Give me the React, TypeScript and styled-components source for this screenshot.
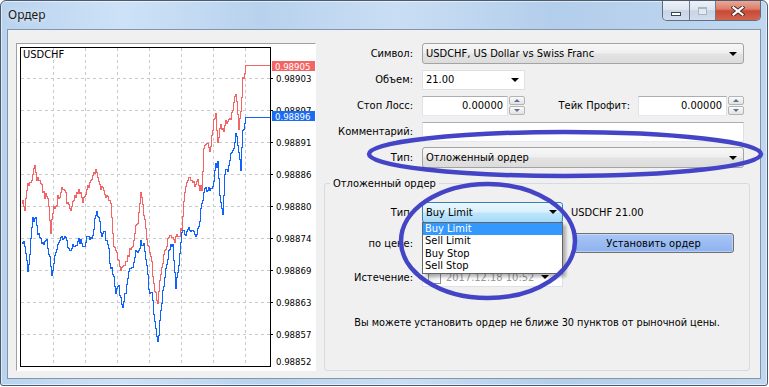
import React from 'react';
import styled, { createGlobalStyle } from 'styled-components';

const UI_FONT = `"DejaVu Sans Condensed", "DejaVu Sans", "Liberation Sans", sans-serif`;

const GlobalStyle = createGlobalStyle`
  html, body { margin: 0; padding: 0; background: #ffffff; }
  * { box-sizing: border-box; }
`;

const Stage = styled.div`
  position: relative;
  width: 769px;
  height: 387px;
  overflow: hidden;
`;

const Window = styled.div`
  width: 768px;
  height: 386px;
  display: flex;
  flex-direction: column;
  border: 1px solid #4b5a6e;
  border-radius: 6px 6px 3px 3px;
  background: linear-gradient(90deg, #b9d3ee 0%, #cde2f7 16%, #b8d2ed 34%, #c9def4 52%, #b3ceeb 72%, #c0d7ef 100%);
  box-shadow: inset 0 0 0 1px rgba(255, 255, 255, 0.55);
  font-family: ${UI_FONT};
  font-size: 11px;
  color: #000;
`;

const TitleBar = styled.div`
  height: 28px;
  display: flex;
  align-items: flex-start;
  padding: 0 6px 0 7px;
`;

const Title = styled.div`
  flex: 1;
  margin-top: 6px;
  font-family: "Noto Sans", "Liberation Sans", sans-serif;
  font-size: 12px;
  line-height: 16px;
  color: #1b1b1b;
  text-shadow: 0 0 6px rgba(255, 255, 255, 0.9);
`;

const CaptionGroup = styled.div`
  display: flex;
  height: 20px;
  border: 1px solid #5d6d82;
  border-top: none;
  border-radius: 0 0 5px 5px;
  overflow: hidden;
`;

const CaptionButton = styled.div<{ $kind: 'min' | 'max' | 'close' }>`
  width: ${p => (p.$kind === 'close' ? 45 : 26)}px;
  display: flex;
  align-items: center;
  justify-content: center;
  border-left: ${p => (p.$kind === 'min' ? 'none' : '1px solid #6b7a8e')};
  background: ${p =>
    p.$kind === 'close'
      ? 'linear-gradient(#eaa898 0%, #dc7f6c 42%, #c84a35 52%, #d2644f 100%)'
      : 'linear-gradient(#eef2f7 0%, #dde5ef 45%, #c8d4e3 52%, #d3dded 100%)'};
`;

const MinGlyph = styled.span`
  width: 10px;
  height: 4px;
  margin-top: 6px;
  background: #fff;
  border: 1px solid #3a475a;
`;

const MaxGlyph = styled.span`
  width: 9px;
  height: 8px;
  border: 1px solid #a9b6c6;
  border-top-width: 2px;
  background: #e3e9f1;
`;

const Client = styled.div`
  flex: 1;
  margin: 0 6px 6px 6px;
  border: 1px solid #8395ab;
  background: #f0f0f0;
  display: flex;
  padding: 13px 10px 6px 8px;
`;

const ChartPanel = styled.div`
  width: 300px;
  height: 328px;
  flex-shrink: 0;
  background: #fff;
  border: 1px solid;
  border-color: #a0a0a0 #ffffff #ffffff #a0a0a0;
  overflow: hidden;
  svg {
    display: block;
  }
`;

const RightPane = styled.div`
  flex: 1;
  margin-left: 8px;
  display: flex;
  flex-direction: column;
`;

const Row = styled.div<{ $mt?: number; $h?: number }>`
  display: flex;
  align-items: center;
  height: ${p => p.$h ?? 21}px;
  margin-top: ${p => p.$mt ?? 0}px;
  padding-right: 6px;
`;

const Label = styled.label<{ $w?: number }>`
  width: ${p => p.$w ?? 89}px;
  flex-shrink: 0;
  margin-right: 9px;
  text-align: right;
  white-space: nowrap;
`;

const InlineLabel = styled.span`
  flex: 1;
  text-align: right;
  margin-right: 8px;
  white-space: nowrap;
`;

const ComboBox = styled.div<{ $w?: number; $hot?: boolean; $editable?: boolean }>`
  position: relative;
  width: ${p => (p.$w ? `${p.$w}px` : 'auto')};
  flex: ${p => (p.$w ? '0 0 auto' : '1')};
  height: ${p => (p.$editable ? 20 : 21)}px;
  display: flex;
  align-items: center;
  padding: 0 5px 0 3px;
  border: 1px solid ${p => (p.$hot ? '#3c7fb1' : p.$editable ? '#dde1e7' : '#a3a3a3')};
  border-radius: ${p => (p.$editable ? 0 : 3)}px;
  background: ${p =>
    p.$hot
      ? 'linear-gradient(#eaf6fd 0%, #d9f0fc 48%, #bee6fd 52%, #a7d9f5 100%)'
      : p.$editable
      ? '#ffffff'
      : 'linear-gradient(#f7f7f7 0%, #efefef 48%, #e3e3e3 52%, #dcdcdc 100%)'};
  white-space: nowrap;
`;

const Arrow = styled.span<{ $mr?: number }>`
  width: 0;
  height: 0;
  margin-left: auto;
  margin-right: ${p => p.$mr ?? 1}px;
  border-left: 4px solid transparent;
  border-right: 4px solid transparent;
  border-top: 4px solid #000;
`;

const EditBox = styled.div<{ $align?: 'left' | 'right' }>`
  flex: 1;
  height: 20px;
  display: flex;
  align-items: center;
  justify-content: ${p => (p.$align === 'right' ? 'flex-end' : 'flex-start')};
  padding: 0 4px;
  background: #fff;
  border: 1px solid;
  border-color: #abadb3 #dbdfe6 #e3e9ef #e2e3ea;
`;

const SpinEdit = styled.div<{ $w: number }>`
  width: ${p => p.$w}px;
  flex-shrink: 0;
  display: flex;
  align-items: center;
  gap: 1px;
`;

const Spin = styled.div`
  width: 16px;
  height: 19px;
  display: flex;
  flex-direction: column;
  gap: 1px;
`;

const SpinHalf = styled.div<{ $down?: boolean }>`
  flex: 1;
  display: flex;
  align-items: center;
  justify-content: center;
  border: 1px solid #b4b4b4;
  border-radius: 2px;
  background: linear-gradient(#fbfbfb, #e2e2e2);
  &::after {
    content: '';
    border-left: 3px solid transparent;
    border-right: 3px solid transparent;
    ${p => (p.$down ? 'border-top: 3px solid #5a7196;' : 'border-bottom: 3px solid #5a7196;')}
  }
`;

const GroupBox = styled.fieldset`
  flex: 1;
  min-width: 0;
  margin: 9px 0 1px 0;
  padding: 0;
  border: 1px solid #d5dbe1;
  border-radius: 3px;
  display: flex;
  flex-direction: column;
`;

const GroupTitle = styled.legend`
  margin-left: 5px;
  padding: 0 3px;
  line-height: 13px;
  font-size: 11px;
`;

const Note = styled.span`
  margin-left: 8px;
  white-space: nowrap;
`;

const ActionButton = styled.button`
  width: 161px;
  height: 20px;
  margin-left: 10px;
  padding: 0;
  font-family: ${UI_FONT};
  font-size: 11px;
  color: #000;
  border: 1px solid #707070;
  border-radius: 3px;
  background: linear-gradient(#a9c6f5 0%, #9bbcf2 50%, #8fb2ee 100%);
  box-shadow: inset 0 0 0 1px rgba(255, 255, 255, 0.35);
`;

const DropList = styled.ul`
  position: absolute;
  top: 100%;
  left: -1px;
  right: -1px;
  margin: 0;
  padding: 0;
  list-style: none;
  background: #fff;
  border: 1px solid #646464;
  box-shadow: 3px 3px 3px rgba(0, 0, 0, 0.28);
  z-index: 2;
`;

const DropItem = styled.li<{ $active?: boolean }>`
  height: 12.5px;
  line-height: 12.5px;
  padding-left: 2px;
  background: ${p => (p.$active ? '#3399ff' : 'transparent')};
  color: ${p => (p.$active ? '#fff' : '#000')};
`;

const CheckBox = styled.span`
  width: 13px;
  height: 13px;
  margin: 0 5px 0 2px;
  border: 1px solid #8f8f8f;
  background: linear-gradient(135deg, #dfe3e8, #ffffff);
`;

const DateText = styled.span`
  color: #9a9a9a;
`;

const Message = styled.div`
  margin-top: 29px;
  text-align: center;
  white-space: nowrap;
  font-size: 10.8px;
`;

const Overlay = styled.svg`
  position: absolute;
  left: 0;
  top: 0;
  pointer-events: none;
  z-index: 5;
`;

// chart geometry: svg sits at page (17,44)
const OX = 17;
const OY = 44;

const redKeys = [
  [21, 203], [24, 205], [27, 190], [30, 178], [34, 168], [37, 178], [40, 188], [44, 195], [47, 192],
  [50, 232], [52, 210], [55, 200], [59, 192], [63, 188], [66, 200], [70, 208], [74, 196], [78, 194],
  [82, 198], [86, 192], [90, 185], [93, 176], [96, 172], [99, 186], [103, 190], [107, 192], [110, 205],
  [113, 245], [116, 255], [119, 268], [122, 272], [125, 262], [128, 256], [131, 245], [134, 232],
  [137, 218], [140, 196], [143, 215], [146, 238], [149, 250], [152, 275], [155, 292], [157, 302],
  [160, 272], [163, 252], [166, 240], [169, 232], [172, 236], [175, 238], [178, 240], [181, 228],
  [183, 200], [186, 186], [190, 181], [194, 184], [198, 183], [201, 188], [203, 145], [206, 142],
  [209, 150], [212, 128], [215, 110], [217, 140], [220, 125], [223, 128], [226, 120], [229, 116],
  [232, 110], [235, 94], [238, 126], [240, 112], [242, 80], [245, 65],
];

const blueKeys = [
  [21, 242], [24, 244], [27, 275], [29, 250], [32, 220], [35, 222], [38, 236], [42, 240], [46, 244],
  [49, 258], [51, 275], [54, 258], [57, 248], [60, 238], [64, 240], [68, 250], [72, 248], [76, 240],
  [80, 242], [84, 244], [88, 234], [92, 232], [95, 210], [97, 215], [100, 230], [104, 234], [107, 246],
  [110, 270], [113, 276], [115, 290], [118, 284], [122, 310], [125, 292], [128, 276], [132, 270],
  [135, 256], [138, 246], [140, 238], [143, 246], [146, 262], [148, 286], [152, 300], [155, 330],
  [157, 346], [159, 322], [161, 298], [165, 272], [168, 252], [172, 244], [175, 286], [178, 264],
  [181, 234], [185, 230], [190, 226], [195, 232], [198, 228], [200, 212], [203, 196], [206, 190],
  [210, 190], [212, 186], [214, 170], [217, 162], [219, 198], [222, 213], [224, 176], [228, 164],
  [232, 146], [235, 133], [238, 150], [240, 167], [242, 130], [245, 117],
];

const buildPath = (keys: number[][], seed: number, amp: number) => {
  let s = seed;
  const rand = () => {
    s = (s * 16807) % 2147483647;
    return s / 2147483647;
  };
  let n = 0;
  let seg = 0;
  const lastX = keys[keys.length - 1][0];
  let d = `M${keys[0][0] - OX + 0.5} ${keys[0][1] - OY + 0.5}`;
  for (let x = keys[0][0] + 1; x <= lastX; x++) {
    while (seg < keys.length - 2 && keys[seg + 1][0] < x) seg++;
    const [x0, y0] = keys[seg];
    const [x1, y1] = keys[seg + 1];
    const base = y0 + ((y1 - y0) * (x - x0)) / (x1 - x0);
    n = n * 0.5 + (rand() - 0.5) * amp;
    const y = x === lastX ? y1 : Math.round(base + n);
    d += `H${x - OX + 0.5}V${y - OY + 0.5}`;
  }
  d += `H${270 - OX}`;
  return d;
};

const gridY = [78, 110, 142, 174, 206, 238, 270, 302, 334];
const gridX = [53, 85, 117, 149, 181, 213, 245];
const axisLabels = ['0.98903', '0.98897', '0.98891', '0.98886', '0.98880', '0.98874', '0.98869', '0.98863', '0.98857'];

const Chart = () => {
  const red = buildPath(redKeys, 12345, 9);
  const blue = buildPath(blueKeys, 67891, 9);
  return (
    <svg width="298" height="326" viewBox="0 0 298 326" shapeRendering="crispEdges">
      {gridY.map(y => (
        <line key={`h${y}`} x1={4} x2={253} y1={y - OY + 0.5} y2={y - OY + 0.5} stroke="#c8c8c8" strokeDasharray="3 3" />
      ))}
      {gridX.map(x => (
        <line key={`v${x}`} x1={x - OX + 0.5} x2={x - OX + 0.5} y1={4} y2={322} stroke="#c8c8c8" strokeDasharray="3 3" />
      ))}
      <path d={red} fill="none" stroke="#f46464" />
      <path d={blue} fill="none" stroke="#0f62fe" />
      <rect x={3.5} y={3.5} width={250} height={319} fill="none" stroke="#000" />
      <text x={6} y={14} fontFamily={UI_FONT} fontSize="11" shapeRendering="auto">USDCHF</text>
      {gridY.map((y, i) => (
        <g key={`t${y}`}>
          <line x1={253} x2={256} y1={y - OY + 0.5} y2={y - OY + 0.5} stroke="#000" />
          <text x={259} y={y - OY + 3.5} fontFamily={UI_FONT} fontSize="9.5">{axisLabels[i]}</text>
        </g>
      ))}
      <text x={259} y={321} fontFamily={UI_FONT} fontSize="9.5">0.98852</text>
      <rect x={255} y={17} width={43} height={10} fill="#f46464" />
      <text x={258} y={25.5} fontFamily={UI_FONT} fontSize="9.5" fill="#fff">0.98905</text>
      <rect x={255} y={67} width={43} height={10} fill="#1c6cf0" />
      <text x={258} y={75.5} fontFamily={UI_FONT} fontSize="9.5" fill="#fff">0.98896</text>
    </svg>
  );
};

const App = () => (
  <Stage>
    <GlobalStyle />
    <Window>
      <TitleBar>
        <Title>Ордер</Title>
        <CaptionGroup>
          <CaptionButton $kind="min"><MinGlyph /></CaptionButton>
          <CaptionButton $kind="max"><MaxGlyph /></CaptionButton>
          <CaptionButton $kind="close">
            <svg width="14" height="10" viewBox="0 0 14 10">
              <path d="M2.5 1.5 L11.5 8.5 M11.5 1.5 L2.5 8.5" stroke="#4a2a26" strokeWidth="4" strokeLinecap="square" />
              <path d="M2.5 1.5 L11.5 8.5 M11.5 1.5 L2.5 8.5" stroke="#ffffff" strokeWidth="2.2" strokeLinecap="square" />
            </svg>
          </CaptionButton>
        </CaptionGroup>
      </TitleBar>
      <Client>
        <ChartPanel>
          <Chart />
        </ChartPanel>
        <RightPane>
          <Row>
            <Label>Символ:</Label>
            <ComboBox>
              USDCHF, US Dollar vs Swiss Franc
              <Arrow $mr={1} />
            </ComboBox>
          </Row>
          <Row $mt={5}>
            <Label>Объем:</Label>
            <ComboBox $w={103} $editable>
              21.00
              <Arrow $mr={0} />
            </ComboBox>
          </Row>
          <Row $mt={5}>
            <Label>Стоп Лосс:</Label>
            <SpinEdit $w={103}>
              <EditBox $align="right">0.00000</EditBox>
              <Spin><SpinHalf /><SpinHalf $down /></Spin>
            </SpinEdit>
            <InlineLabel>Тейк Профит:</InlineLabel>
            <SpinEdit $w={106}>
              <EditBox $align="right">0.00000</EditBox>
              <Spin><SpinHalf /><SpinHalf $down /></Spin>
            </SpinEdit>
          </Row>
          <Row $mt={5}>
            <Label>Комментарий:</Label>
            <EditBox />
          </Row>
          <Row $mt={5}>
            <Label>Тип:</Label>
            <ComboBox>
              Отложенный ордер
              <Arrow $mr={1} />
            </ComboBox>
          </Row>
          <GroupBox>
            <GroupTitle>Отложенный ордер</GroupTitle>
            <Row $mt={12} $h={20}>
              <Label $w={88}>Тип:</Label>
              <ComboBox $w={141} $hot>
                Buy Limit
                <Arrow $mr={0} />
                <DropList>
                  <DropItem $active>Buy Limit</DropItem>
                  <DropItem>Sell Limit</DropItem>
                  <DropItem>Buy Stop</DropItem>
                  <DropItem>Sell Stop</DropItem>
                </DropList>
              </ComboBox>
              <Note>USDCHF 21.00</Note>
            </Row>
            <Row $mt={11} $h={20}>
              <Label $w={88}>по цене:</Label>
              <SpinEdit $w={141}>
                <EditBox $align="right">0.98905</EditBox>
                <Spin><SpinHalf /><SpinHalf $down /></Spin>
              </SpinEdit>
              <ActionButton>Установить ордер</ActionButton>
            </Row>
            <Row $mt={14} $h={20}>
              <Label $w={88}>Истечение:</Label>
              <ComboBox $w={141} $editable>
                <CheckBox />
                <DateText>2017.12.18 10:52</DateText>
                <Arrow $mr={8} />
              </ComboBox>
            </Row>
            <Message>Вы можете установить ордер не ближе 30 пунктов от рыночной цены.</Message>
          </GroupBox>
        </RightPane>
      </Client>
    </Window>
    <Overlay width="769" height="387" viewBox="0 0 769 387">
      <ellipse cx={565} cy={154} rx={196} ry={22} fill="none" stroke="#4444c6" strokeWidth={4.5} />
      <ellipse cx={488} cy={241} rx={87} ry={57} fill="none" stroke="#4444c6" strokeWidth={4.5} />
    </Overlay>
  </Stage>
);

export default App;
